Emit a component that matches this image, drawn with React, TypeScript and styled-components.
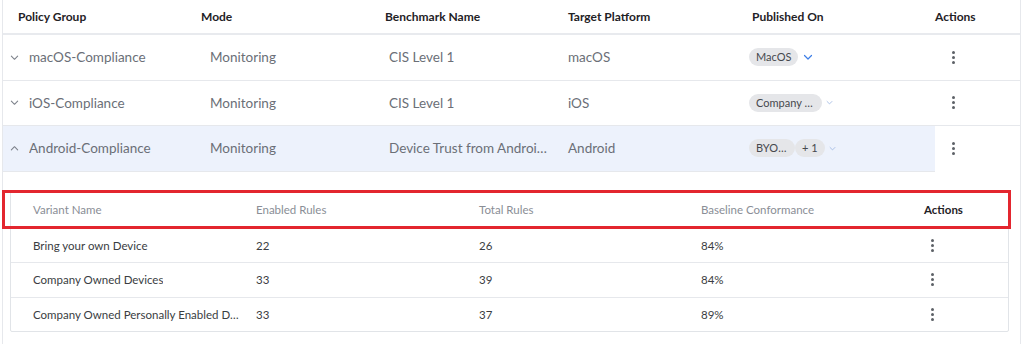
import { Fragment } from "react";
import styled, { createGlobalStyle } from "styled-components";

const GlobalStyle = createGlobalStyle`
  body {
    margin: 0;
    background: #ffffff;
    font-family: Lato, "Noto Sans", sans-serif;
  }
`;

const Page = styled.div`
  position: relative;
  width: 1024px;
  height: 344px;
  padding: 0 3px 0 2px;
  box-sizing: border-box;
  overflow: hidden;
`;

const Panel = styled.div`
  height: 100%;
  border-left: 1px solid #e6e8ec;
  border-right: 1px solid #e6e8ec;
`;

const MainGrid = styled.div`
  display: grid;
  grid-template-columns: 198px 184px 183px 184px 183px 1fr;
`;

const HeadCell = styled.div<{ $inset?: number }>`
  height: 35px;
  box-sizing: border-box;
  display: flex;
  align-items: center;
  padding-left: ${(p) => p.$inset ?? 0}px;
  font-size: 12px;
  font-weight: 700;
  color: #1f2226;
  border-bottom: 2px solid #e8eaee;
`;

const Cell = styled.div<{ $inset?: number; $active?: boolean; $noRule?: boolean }>`
  height: 45.5px;
  box-sizing: border-box;
  display: flex;
  align-items: center;
  gap: 6px;
  padding-left: ${(p) => p.$inset ?? 0}px;
  min-width: 0;
  font-size: 13.5px;
  color: #6b6f77;
  background: ${(p) => (p.$active ? "#edf2fc" : "transparent")};
  border-bottom: 1px solid ${(p) => (p.$noRule ? "transparent" : "#e6e8ec")};
`;

const Clip = styled.span<{ $max: number }>`
  display: block;
  max-width: ${(p) => p.$max}px;
  white-space: nowrap;
  overflow: hidden;
  text-overflow: ellipsis;
`;

const Expander = styled.span`
  display: inline-flex;
  width: 13px;
  color: #7d828b;
`;

const ChipRow = styled.div`
  display: flex;
  align-items: center;
  margin-left: -3px;
`;

const Chip = styled.span<{ $max?: number }>`
  display: block;
  height: 18px;
  line-height: 18px;
  padding: 0 7px;
  border-radius: 9px;
  background: #e5e6e9;
  color: #45484d;
  font-size: 11px;
  white-space: nowrap;
  overflow: hidden;
  text-overflow: ellipsis;
  max-width: ${(p) => (p.$max ? `${p.$max}px` : "none")};
  box-sizing: border-box;
`;

const ChipCaret = styled.span<{ $strong?: boolean }>`
  display: inline-flex;
  margin-left: ${(p) => (p.$strong ? 5 : 4)}px;
  color: ${(p) => (p.$strong ? "#3d7ee6" : "#9fb7e2")};
`;

const Kebab = styled.span`
  display: inline-flex;
  flex-direction: column;
  gap: 2px;

  i {
    width: 3px;
    height: 3px;
    border-radius: 50%;
    background: #5d6167;
  }
`;

const NestedWrap = styled.div`
  padding: 18px 11px 0 7px;
`;

const NestedBox = styled.div`
  border: 1px solid #e1e4e8;
  border-radius: 2px;
`;

const NestedGrid = styled.div`
  display: grid;
  grid-template-columns: 245px 223px 222px 223px 1fr;
`;

const NestedHead = styled.div<{ $inset?: number; $bold?: boolean }>`
  height: 37px;
  display: flex;
  align-items: center;
  padding-left: ${(p) => p.$inset ?? 0}px;
  font-size: 11.5px;
  font-weight: ${(p) => (p.$bold ? 700 : 400)};
  color: ${(p) => (p.$bold ? "#1f2226" : "#8a8e96")};
`;

const NestedCell = styled.div<{ $inset?: number }>`
  height: 34.5px;
  box-sizing: border-box;
  display: flex;
  align-items: center;
  min-width: 0;
  padding-left: ${(p) => p.$inset ?? 0}px;
  font-size: 11.5px;
  color: #3a3d42;
  border-top: 1px solid #e6e8ec;
`;

const Annotation = styled.div`
  position: absolute;
  left: 2px;
  top: 190px;
  width: 1009px;
  height: 39px;
  box-sizing: border-box;
  border: 3px solid #e3262f;
  pointer-events: none;
`;

function Chevron({ up, size = 9 }: { up?: boolean; size?: number }) {
  return (
    <svg width={size} height={size} viewBox="0 0 10 10" fill="none">
      <path
        d={up ? "M1.5 6.5 L5 3 L8.5 6.5" : "M1.5 3.5 L5 7 L8.5 3.5"}
        stroke="currentColor"
        strokeWidth="1.2"
        strokeLinecap="round"
        strokeLinejoin="round"
      />
    </svg>
  );
}

function Dots() {
  return (
    <Kebab>
      <i />
      <i />
      <i />
    </Kebab>
  );
}

type Policy = {
  name: string;
  bench: string;
  platform: string;
  chips: { label: string; max?: number }[];
  open?: boolean;
  strongCaret?: boolean;
};

const policies: Policy[] = [
  { name: "macOS-Compliance", bench: "CIS Level 1", platform: "macOS", chips: [{ label: "MacOS" }], strongCaret: true },
  { name: "iOS-Compliance", bench: "CIS Level 1", platform: "iOS", chips: [{ label: "Company Owned Devices", max: 73 }] },
  {
    name: "Android-Compliance",
    bench: "Device Trust from Android Enterprise",
    platform: "Android",
    chips: [{ label: "BYOD Devices", max: 46 }, { label: "+ 1" }],
    open: true,
  },
];

const variants = [
  { name: "Bring your own Device", enabled: 22, total: 26, baseline: "84%" },
  { name: "Company Owned Devices", enabled: 33, total: 39, baseline: "84%" },
  { name: "Company Owned Personally Enabled Devices", enabled: 33, total: 37, baseline: "89%" },
];

export default function App() {
  return (
    <>
      <GlobalStyle />
      <Page>
        <Panel>
          <MainGrid>
            <HeadCell $inset={15}>Policy Group</HeadCell>
            <HeadCell>Mode</HeadCell>
            <HeadCell>Benchmark Name</HeadCell>
            <HeadCell>Target Platform</HeadCell>
            <HeadCell>Published On</HeadCell>
            <HeadCell>Actions</HeadCell>
            {policies.map((p) => (
              <Fragment key={p.name}>
                <Cell $inset={7} $active={p.open}>
                  <Expander>
                    <Chevron up={p.open} />
                  </Expander>
                  <Clip $max={170}>{p.name}</Clip>
                </Cell>
                <Cell $inset={9} $active={p.open}>
                  Monitoring
                </Cell>
                <Cell $inset={4} $active={p.open}>
                  <Clip $max={160}>{p.bench}</Clip>
                </Cell>
                <Cell $active={p.open}>{p.platform}</Cell>
                <Cell $active={p.open}>
                  <ChipRow>
                    {p.chips.map((c) => (
                      <Chip key={c.label} $max={c.max}>
                        {c.label}
                      </Chip>
                    ))}
                    <ChipCaret $strong={p.strongCaret}>
                      <Chevron size={p.strongCaret ? 10 : 7} />
                    </ChipCaret>
                  </ChipRow>
                </Cell>
                <Cell $inset={17} $noRule={p.open}>
                  <Dots />
                </Cell>
              </Fragment>
            ))}
          </MainGrid>
          <NestedWrap>
            <NestedBox>
              <NestedGrid>
                <NestedHead $inset={22}>Variant Name</NestedHead>
                <NestedHead>Enabled Rules</NestedHead>
                <NestedHead>Total Rules</NestedHead>
                <NestedHead>Baseline Conformance</NestedHead>
                <NestedHead $bold>Actions</NestedHead>
                {variants.map((v) => (
                  <Fragment key={v.name}>
                    <NestedCell $inset={22}>
                      <Clip $max={209}>{v.name}</Clip>
                    </NestedCell>
                    <NestedCell>{v.enabled}</NestedCell>
                    <NestedCell>{v.total}</NestedCell>
                    <NestedCell>{v.baseline}</NestedCell>
                    <NestedCell $inset={7}>
                      <Dots />
                    </NestedCell>
                  </Fragment>
                ))}
              </NestedGrid>
            </NestedBox>
          </NestedWrap>
        </Panel>
        <Annotation />
      </Page>
    </>
  );
}
